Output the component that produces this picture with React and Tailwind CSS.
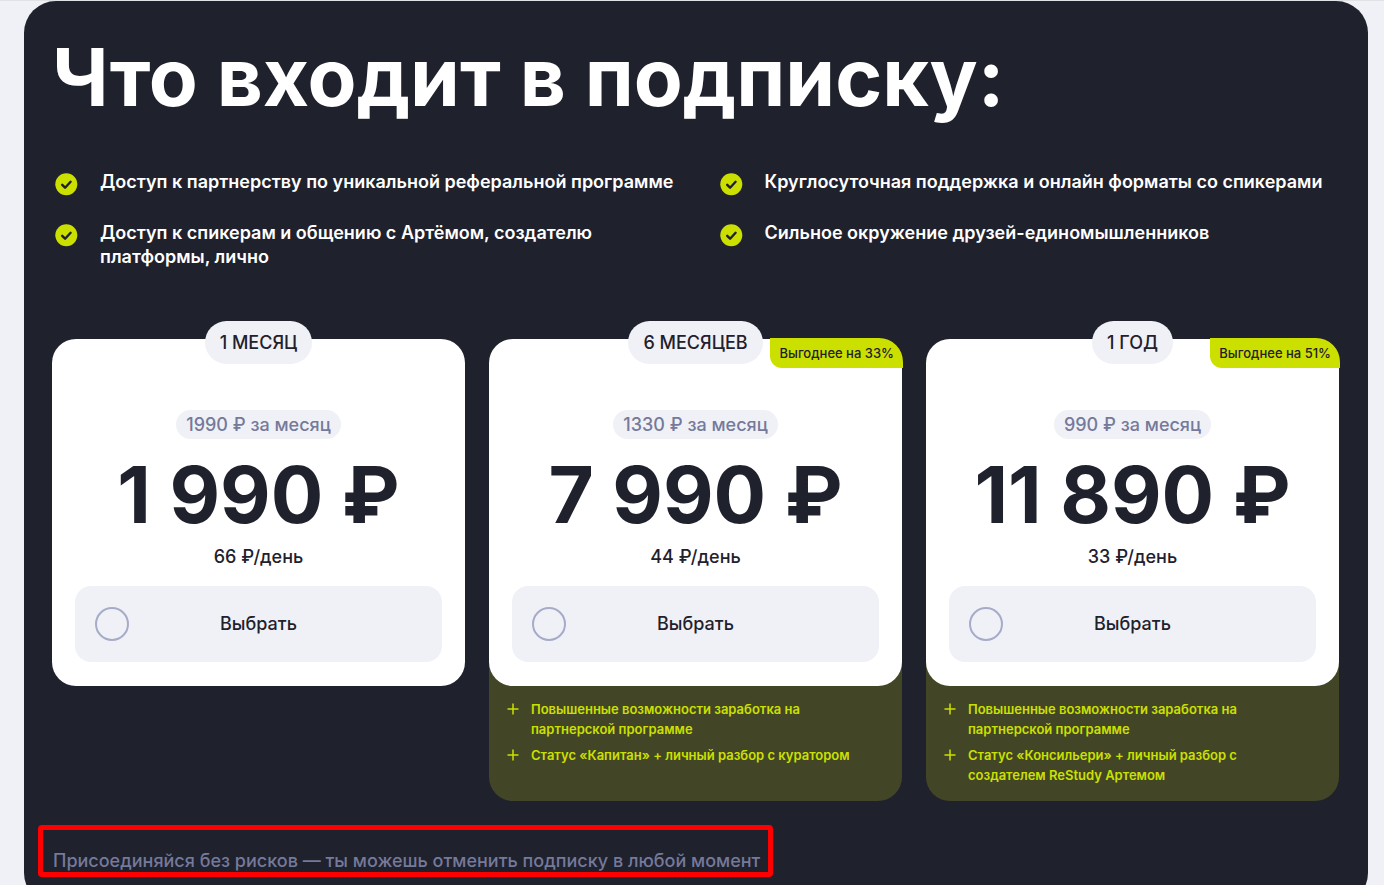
import React, { useState } from 'react';

const features = [
    'Доступ к партнерству по уникальной реферальной программе',
    'Круглосуточная поддержка и онлайн форматы со спикерами',
    'Доступ к спикерам и общению с Артёмом, создателю платформы, лично',
    'Сильное окружение друзей-единомышленников',
];

const plans = [
    {
        id: 'month',
        title: '1 МЕСЯЦ',
        perMonth: '1990 ₽ за месяц',
        price: '1 990 ₽',
        perDay: '66 ₽/день',
        bonuses: [],
    },
    {
        id: 'half-year',
        title: '6 МЕСЯЦЕВ',
        perMonth: '1330 ₽ за месяц',
        price: '7 990 ₽',
        perDay: '44 ₽/день',
        badge: 'Выгоднее на 33%',
        bonuses: [
            'Повышенные возможности заработка на партнерской программе',
            'Статус «Капитан» + личный разбор с куратором',
        ],
    },
    {
        id: 'year',
        title: '1 ГОД',
        perMonth: '990 ₽ за месяц',
        price: '11 890 ₽',
        perDay: '33 ₽/день',
        badge: 'Выгоднее на 51%',
        bonuses: [
            'Повышенные возможности заработка на партнерской программе',
            'Статус «Консильери» + личный разбор с создателем ReStudy Артемом',
        ],
    },
];

const CheckIcon = () => (
    <svg className="size-7 shrink-0" viewBox="0 0 28 28" fill="none" aria-hidden="true">
        <circle cx="14.3" cy="14.3" r="11" fill="#cce000" />
        <path
            d="M10.2 14.8l2.9 2.9 5.5-5.9"
            stroke="#1f212d"
            strokeWidth="2.4"
            strokeLinecap="round"
            strokeLinejoin="round"
        />
    </svg>
);

const PlusIcon = () => (
    <svg className="size-5 shrink-0" viewBox="0 0 20 20" fill="none" aria-hidden="true">
        <path d="M10 4.5v11M4.5 10h11" stroke="#cce000" strokeWidth="1.5" />
    </svg>
);

const PlanCard = ({ plan, selected, onSelect }) => (
    <div className={plan.bonuses.length > 0 ? 'flex flex-col rounded-3xl bg-[#424526]' : 'flex flex-col'}>
        <div className="relative flex flex-col items-center rounded-3xl bg-white px-[23px] pb-6">
            <h2 className="-mt-[18px] rounded-full bg-[#f0f1f6] px-[15px] py-2 text-lg leading-[27px] font-medium">
                {plan.title}
            </h2>
            {plan.badge && (
                <span className="absolute -top-px -right-px rounded-tr-3xl rounded-bl-xl bg-[#cce000] px-[9px] py-[5px] text-[13px] leading-5 font-medium">
                    {plan.badge}
                </span>
            )}
            <p className="mt-[46px] rounded-full bg-[#f0f1f6] px-2.5 text-lg leading-[29px] font-medium text-[#75799a]">
                {plan.perMonth}
            </p>
            <p className="mt-4 text-[78px] leading-20 font-bold whitespace-nowrap">{plan.price}</p>
            <p className="mt-2 text-lg leading-7 font-medium">{plan.perDay}</p>
            <label className="mt-[15px] flex h-19 w-full cursor-pointer items-center rounded-2xl bg-[#f0f1f6] px-5 text-lg font-medium">
                <input
                    type="radio"
                    name="plan"
                    value={plan.id}
                    checked={selected}
                    onChange={() => onSelect(plan.id)}
                    className="size-[34px] shrink-0 cursor-pointer appearance-none rounded-full border-2 border-[#a6abc8] checked:border-[#cce000] checked:bg-[#cce000]"
                />
                <span className="flex-1 pr-[34px] text-center">Выбрать</span>
            </label>
        </div>
        {plan.bonuses.length > 0 && (
            <ul className="flex flex-col gap-1.5 px-3.5 pt-[13px] pb-4">
                {plan.bonuses.map((bonus) => (
                    <li key={bonus} className="flex gap-2 text-[13px] leading-5 font-semibold text-[#cce000]">
                        <PlusIcon />
                        <span className="max-w-[340px]">{bonus}</span>
                    </li>
                ))}
            </ul>
        )}
    </div>
);

const App = () => {
    const [selectedPlan, setSelectedPlan] = useState('');

    return (
        <main className="min-h-screen border-t border-[#e1e2e6] bg-[#f0f1f6] pr-4 pb-6 pl-6 font-['Inter','Noto_Sans',sans-serif] text-[#1f212d]">
            <section className="rounded-4xl bg-[#1f212d] pt-7 pr-[29px] pb-7 pl-7">
                <h1 className="text-[80px] leading-[96px] font-bold text-white">Что входит в подписку:</h1>

                <ul className="mt-[45px] grid grid-cols-2 gap-x-[42px] gap-y-[23px]">
                    {features.map((feature) => (
                        <li key={feature} className="flex gap-5 text-lg leading-6 font-semibold text-white">
                            <CheckIcon />
                            <span>{feature}</span>
                        </li>
                    ))}
                </ul>

                <div className="mt-[70px] grid grid-cols-3 gap-6">
                    {plans.map((plan) => (
                        <PlanCard
                            key={plan.id}
                            plan={plan}
                            selected={selectedPlan === plan.id}
                            onSelect={setSelectedPlan}
                        />
                    ))}
                </div>

                <div className="mt-6 -ml-3.5 w-fit rounded-sm border-5 border-[#ff0000] pt-5 pr-2 pl-2.5">
                    <p className="text-lg leading-[22px] font-medium text-[#75799a]">
                        Присоединяйся без рисков — ты можешь отменить подписку в любой момент
                    </p>
                </div>
            </section>
        </main>
    );
};

export default App;
